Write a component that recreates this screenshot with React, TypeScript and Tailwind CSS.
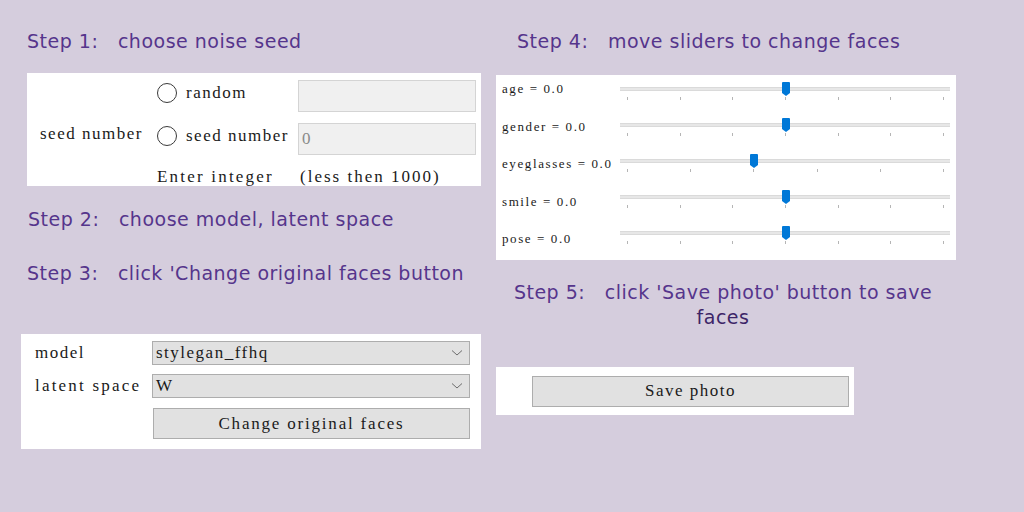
import React from "react";

const serif = "font-['SimSun','Liberation_Serif',serif]";
const title = "font-['DejaVu_Sans','Verdana',sans-serif] text-[19px] tracking-[0.5px] text-[#55358c] whitespace-pre leading-[24px]";

function Radio({ label }: { label: string }) {
  return (
    <div className="flex items-center gap-[9px] -mt-[6px]">
      <span className="w-[20px] h-[20px] rounded-full border-[1.5px] border-[#3a3a3a] bg-white" />
      <span>{label}</span>
    </div>
  );
}

function Select({ value }: { value: string }) {
  return (
    <div className="h-[24px] flex items-center justify-between border border-[#adadad] bg-[#e1e1e1] pl-[3px] pr-[6px]">
      <span>{value}</span>
      <svg width="12" height="8" viewBox="0 0 12 8" fill="none">
        <path d="M1 1.5 L6 6 L11 1.5" stroke="#6d6d6d" strokeWidth="1" />
      </svg>
    </div>
  );
}

function Slider({ value, ticks }: { value: number; ticks: number }) {
  return (
    <div className="relative h-[36px] w-[330px]">
      <div className="mt-[12px] h-[4px] bg-[#e7e7e7] border-y border-[#dadada]" />
      <div className="mt-[6px] flex justify-between pl-[7px] pr-[6px]">
        {Array.from({ length: ticks }).map((_, i) => (
          <span key={i} className="w-px h-[3px] bg-[#b5b5b5]" />
        ))}
      </div>
      <div
        className="absolute top-[7px] w-[8px] h-[14px]"
        style={{ left: 7 + value * 317 - 4 }}
      >
        <svg width="8" height="14" viewBox="0 0 8 14">
          <path d="M0 1 Q0 0 1 0 H7 Q8 0 8 1 V11 L4 14 L0 11 Z" fill="#0078d7" />
        </svg>
      </div>
    </div>
  );
}

const sliders = [
  { name: "age", value: 0.5, ticks: 7 },
  { name: "gender", value: 0.5, ticks: 7 },
  { name: "eyeglasses", value: 0.4, ticks: 6 },
  { name: "smile", value: 0.5, ticks: 7 },
  { name: "pose", value: 0.5, ticks: 7 },
];

export default function App() {
  return (
    <main className="w-[1024px] h-[512px] bg-[#d5cddd] flex overflow-hidden">
      <section className="ml-[21px] w-[460px] flex flex-col">
        <h1 className={`${title} mt-[29px] ml-[6px]`}>Step 1:   choose noise seed</h1>
        <div className={`${serif} ml-[6px] mt-[20px] h-[113px] bg-white flex items-center overflow-hidden text-[17px] text-[#1a1a1a] tracking-[1.5px]`}>
          <div className="w-[130px] pl-[13px] mt-[8px] whitespace-nowrap">seed number</div>
          <div className="grid grid-cols-[141px_178px] gap-y-[11px] self-start mt-[7px]">
            <div className="h-[32px] flex items-center"><Radio label="random" /></div>
            <div className="h-[32px] bg-[#f0f0f0] border border-[#d4d4d4]" />
            <div className="h-[32px] flex items-center"><Radio label="seed number" /></div>
            <div className="h-[32px] bg-[#f0f0f0] border border-[#d4d4d4] flex items-center pl-[3px] text-[#8a8a8a]">0</div>
            <div className="h-[22px] flex items-center whitespace-nowrap tracking-[2.2px]">Enter integer</div>
            <div className="h-[22px] flex items-center pl-[2px] whitespace-nowrap tracking-[2px]">(less then 1000)</div>
          </div>
        </div>
        <h1 className={`${title} mt-[21px] ml-[7px]`}>Step 2:   choose model, latent space</h1>
        <h1 className={`${title} mt-[30px] ml-[6px]`}>Step 3:   click 'Change original faces button</h1>
        <div className={`${serif} mt-[49px] h-[115px] bg-white grid grid-cols-[117px_318px] gap-y-[9px] content-start pt-[7px] pl-[14px] text-[17px] text-[#1a1a1a] tracking-[1.5px]`}>
          <div className="h-[24px] flex items-center">model</div>
          <Select value="stylegan_ffhq" />
          <div className="h-[24px] flex items-center whitespace-nowrap tracking-[2.2px]">latent space</div>
          <Select value="W" />
          <div />
          <button className="h-[31px] ml-px mt-px border border-[#adadad] bg-[#e1e1e1] text-[#1a1a1a] tracking-[1.8px]">Change original faces</button>
        </div>
      </section>

      <section className="ml-[15px] w-[460px] flex flex-col">
        <h1 className={`${title} mt-[29px] ml-[21px]`}>Step 4:   move sliders to change faces</h1>
        <div className={`${serif} mt-[22px] h-[185px] bg-white flex text-[13px] text-[#1a1a1a] tracking-[1.6px]`}>
          <div className="w-[124px] pl-[6px] pt-[6px] flex flex-col gap-[21.5px]">
            {sliders.map((s) => (
              <div key={s.name} className="h-[16px] leading-[16px] whitespace-nowrap">{s.name} = 0.0</div>
            ))}
          </div>
          <div className="flex flex-col">
            {sliders.map((s) => (
              <Slider key={s.name} value={s.value} ticks={s.ticks} />
            ))}
          </div>
        </div>
        <h1 className={`${title} mt-[20px] w-[454px] text-center whitespace-pre-wrap leading-[25px]`}>
          Step 5:   click 'Save photo' button to save{"\n"}<span className="text-[#3d2568]">faces</span>
        </h1>
        <div className={`${serif} mt-[37px] w-[358px] h-[48px] bg-white flex items-center pl-[36px] text-[17px] text-[#1a1a1a] tracking-[1.5px]`}>
          <button className="w-[317px] h-[31px] border border-[#adadad] bg-[#e1e1e1] tracking-[1.5px]">Save photo</button>
        </div>
      </section>
    </main>
  );
}
